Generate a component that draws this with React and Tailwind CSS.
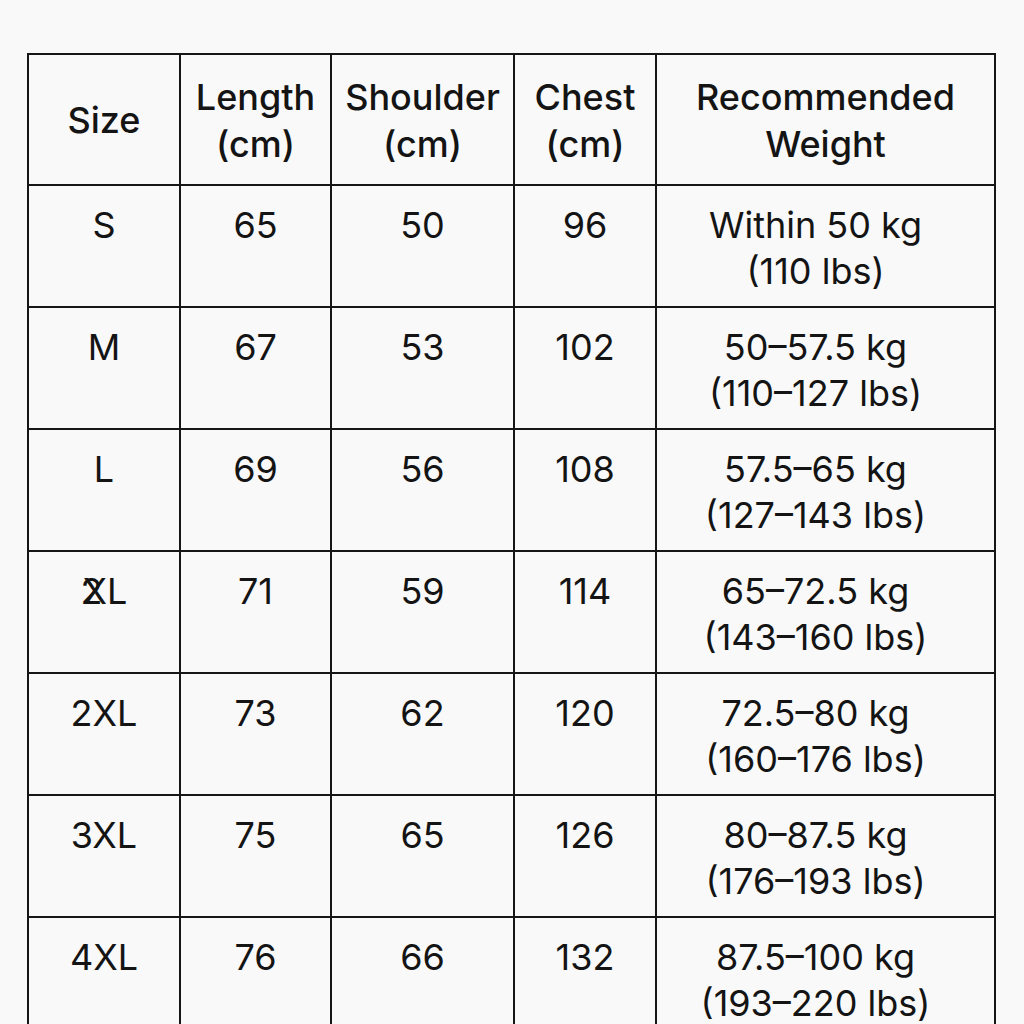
import React from "react";

const rows = [
  ["S", "65", "50", "96", "Within 50 kg", "(110 lbs)"],
  ["M", "67", "53", "102", "50–57.5 kg", "(110–127 lbs)"],
  ["L", "69", "56", "108", "57.5–65 kg", "(127–143 lbs)"],
  ["2XL*", "71", "59", "114", "65–72.5 kg", "(143–160 lbs)"],
  ["2XL", "73", "62", "120", "72.5–80 kg", "(160–176 lbs)"],
  ["3XL", "75", "65", "126", "80–87.5 kg", "(176–193 lbs)"],
  ["4XL", "76", "66", "132", "87.5–100 kg", "(193–220 lbs)"],
];

const headCell =
  "h-[131px] border-r-2 border-b-2 border-[#161616] flex flex-col items-center justify-center text-center font-medium text-[36px] leading-[47px] pt-[2px]";
const bodyCell =
  "h-[122px] border-r-2 border-b-2 border-[#161616] flex flex-col items-center justify-start text-center text-[36px] leading-[46px] pt-[16px]";

export default function App() {
  return (
    <div
      className="w-[1024px] h-[1024px] overflow-hidden bg-[#f9f9f9] text-[#141414]"
      style={{ fontFamily: "Inter, 'Noto Sans', sans-serif" }}
    >
      <div className="ml-[27px] mt-[53px] inline-grid grid-cols-[152px_151px_183px_142px_339px] border-l-2 border-t-2 border-[#161616]">
        <div className={headCell}>Size</div>
        <div className={headCell}>
          <span>Length</span>
          <span>(cm)</span>
        </div>
        <div className={headCell}>
          <span>Shoulder</span>
          <span>(cm)</span>
        </div>
        <div className={headCell}>
          <span>Chest</span>
          <span>(cm)</span>
        </div>
        <div className={headCell}>
          <span>Recommended</span>
          <span>Weight</span>
        </div>
        {rows.map((r, i) => (
          <React.Fragment key={i}>
            <div className={bodyCell}>
              {r[0] === "2XL*" ? (
                <span className="inline-flex">
                  <span className="mr-[-20px]">2</span>
                  <span>XL</span>
                </span>
              ) : (
                <span>{r[0]}</span>
              )}
            </div>
            <div className={bodyCell}>{r[1]}</div>
            <div className={bodyCell}>{r[2]}</div>
            <div className={bodyCell}>{r[3]}</div>
            <div className={bodyCell + " pr-[20px]"}>
              <span>{r[4]}</span>
              <span>{r[5]}</span>
            </div>
          </React.Fragment>
        ))}
      </div>
    </div>
  );
}
